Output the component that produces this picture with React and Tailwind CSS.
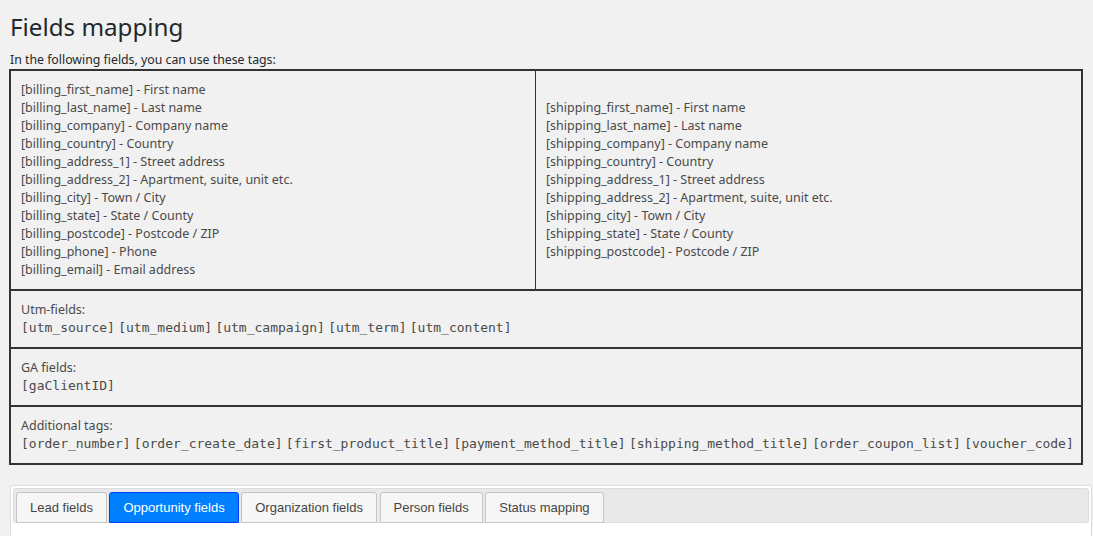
const billing = [
  ["[billing_first_name]", "First name"],
  ["[billing_last_name]", "Last name"],
  ["[billing_company]", "Company name"],
  ["[billing_country]", "Country"],
  ["[billing_address_1]", "Street address"],
  ["[billing_address_2]", "Apartment, suite, unit etc."],
  ["[billing_city]", "Town / City"],
  ["[billing_state]", "State / County"],
  ["[billing_postcode]", "Postcode / ZIP"],
  ["[billing_phone]", "Phone"],
  ["[billing_email]", "Email address"],
];

const shipping = [
  ["[shipping_first_name]", "First name"],
  ["[shipping_last_name]", "Last name"],
  ["[shipping_company]", "Company name"],
  ["[shipping_country]", "Country"],
  ["[shipping_address_1]", "Street address"],
  ["[shipping_address_2]", "Apartment, suite, unit etc."],
  ["[shipping_city]", "Town / City"],
  ["[shipping_state]", "State / County"],
  ["[shipping_postcode]", "Postcode / ZIP"],
];

const tabs = ["Lead fields", "Opportunity fields", "Organization fields", "Person fields", "Status mapping"];

const TagLine = ({ tags }) => (
  <div className="whitespace-nowrap">
    {tags.map((t, i) => (
      <span key={t}>
        {i > 0 && " "}
        <code className="font-['DejaVu_Sans_Mono',monospace] text-[13px]">{t}</code>
      </span>
    ))}
  </div>
);

const TagRow = ({ label, tags }) => (
  <div className="border-t-2 border-[#333] px-[10px] py-[10px]">
    <div>{label}</div>
    <TagLine tags={tags} />
  </div>
);

export default function App() {
  return (
    <div className="min-h-screen bg-[#f1f1f1] font-['Noto_Sans',sans-serif] text-[12.5px] leading-[18px] text-[#23282d]">
      <div className="pl-[10px] pr-[10px] pt-[10px]">
        <h1 className="text-[24.2px] leading-[34px] text-[#23282d]">Fields mapping</h1>
        <p className="mt-[8px] mb-[1px] text-[12.3px] leading-[16px]">In the following fields, you can use these tags:</p>

        <div className="w-[1074px] -ml-px border-2 border-[#333] text-[#4a4a4a]">
          <div className="flex">
            <div className="w-[525px] border-r border-[#333] px-[10px] py-[10px]">
              {billing.map(([tag, name]) => (
                <div key={tag}>{tag} - {name}</div>
              ))}
            </div>
            <div className="flex flex-1 flex-col justify-center px-[10px] py-[10px]">
              {shipping.map(([tag, name]) => (
                <div key={tag}>{tag} - {name}</div>
              ))}
            </div>
          </div>
          <TagRow label="Utm-fields:" tags={["[utm_source]", "[utm_medium]", "[utm_campaign]", "[utm_term]", "[utm_content]"]} />
          <TagRow label="GA fields:" tags={["[gaClientID]"]} />
          <TagRow
            label="Additional tags:"
            tags={[
              "[order_number]",
              "[order_create_date]",
              "[first_product_title]",
              "[payment_method_title]",
              "[shipping_method_title]",
              "[order_coupon_list]",
              "[voucher_code]",
            ]}
          />
        </div>

        <div className="mt-[20px] w-[1082px] rounded-[3px] border border-[#ddd] bg-white p-[2px] font-['Liberation_Sans',Arial,sans-serif] text-[13px]">
          <div className="flex h-[35px] items-start gap-[2.6px] rounded-[3px] border border-[#ddd] bg-[#e9e9e9] px-[2px] pt-[3px]">
            {tabs.map((t, i) => (
              <button
                key={t}
                className={
                  i === 1
                    ? "h-[31px] rounded-t-[3px] border border-[#003eff] bg-[#007fff] px-[13px] leading-[29px] text-white"
                    : "h-[31px] rounded-t-[3px] border border-[#c5c5c5] bg-[#f6f6f6] px-[13px] leading-[29px] text-[#454545]"
                }
              >
                {t}
              </button>
            ))}
          </div>
          <div className="h-[20px]" />
        </div>
      </div>
    </div>
  );
}
